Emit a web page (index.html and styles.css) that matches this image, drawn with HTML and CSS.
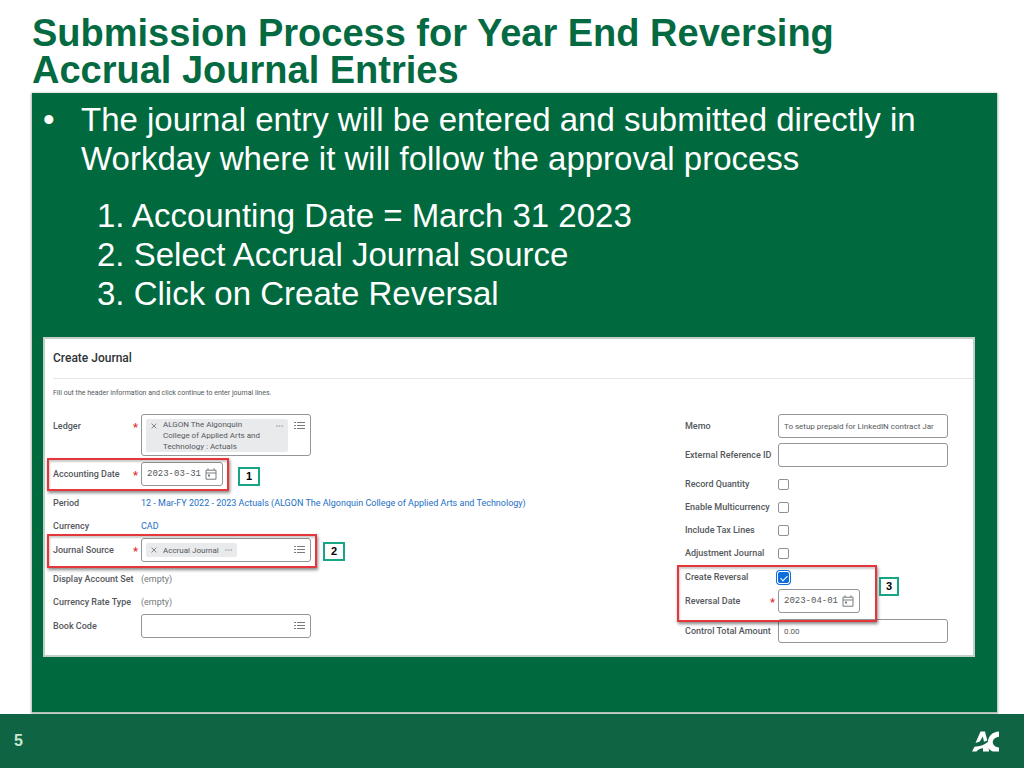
FILE: index.html
```html
<!DOCTYPE html>
<html lang="en">
<head>
<meta charset="utf-8">
<title>Submission Process for Year End Reversing Accrual Journal Entries</title>
<link rel="stylesheet" href="styles.css">
</head>
<body>
<svg width="0" height="0" class="defs" aria-hidden="true">
  <symbol id="list" viewBox="0 0 11 10"><path d="M0 1.500h2M3 1.500h8M0 4.500h2M3 4.500h8M0 7.500h2M3 7.500h8" stroke="currentColor" stroke-width="1" fill="none"/></symbol>
  <symbol id="calendar" viewBox="0 0 12 12"><path d="M1 2.200h10v9H1zM1 5h10M3 .3v2M9 .3v2" stroke="currentColor" stroke-width="1" fill="none"/><path d="M3 6.600h2v2H3z" fill="currentColor"/></symbol>
  <symbol id="cross" viewBox="0 0 6 6"><path d="M.6.6l4.800 4.800M5.400.6L.6 5.400" stroke="currentColor" stroke-width="0.9" fill="none"/></symbol>
  <symbol id="dots" viewBox="0 0 7 2"><path d="M0 1h1.600M2.700 1h1.600M5.400 1h1.600" stroke="currentColor" stroke-width="0.8" fill="none"/></symbol>
</svg>
<div class="slide">
  <h1 class="title">Submission Process for Year End Reversing<br>Accrual Journal Entries</h1>
  <main class="panel">
    <ul class="bullets"><li>The journal entry will be entered and submitted directly in Workday where it will follow the approval process</li></ul>
    <div class="steps">
      <p>1. Accounting Date = March 31 2023</p>
      <p>2. Select Accrual Journal source</p>
      <p>3. Click on Create Reversal</p>
    </div>
    <section class="card">
      <h2 class="card-title">Create Journal</h2>
      <p class="hint">Fill out the header information and click continue to enter journal lines.</p>
      <form class="form">
        <div class="column">
          <div class="row row-ledger">
            <span class="label" id="ledger">Ledger</span><span class="star">*</span>
            <div class="field picker picker-tall" role="group" aria-labelledby="ledger">
              <div class="chip chip-wide">
                <button type="button" class="icon-button" aria-label="Remove"><svg class="cross"><use href="#cross"/></svg></button>
                <span class="chip-text">ALGON The Algonquin<br>College of Applied Arts and<br>Technology : Actuals</span>
                <button type="button" class="icon-button" aria-label="More"><svg class="dots"><use href="#dots"/></svg></button>
              </div>
              <button type="button" class="icon-button list-button" aria-label="Choose ledger"><svg class="list"><use href="#list"/></svg></button>
            </div>
          </div>
          <div class="row row-date">
            <label class="label" for="date">Accounting Date</label><span class="star">*</span>
            <div class="field date"><input id="date" type="text" value="2023-03-31"><button type="button" class="icon-button" aria-label="Open calendar"><svg class="calendar"><use href="#calendar"/></svg></button></div>
            <span class="mark mark-one"></span><span class="callout callout-one">1</span>
          </div>
          <div class="row"><span class="label">Period</span><a class="link" href="#">12 - Mar-FY 2022 - 2023 Actuals (ALGON The Algonquin College of Applied Arts and Technology)</a></div>
          <div class="row"><span class="label">Currency</span><a class="link" href="#">CAD</a></div>
          <div class="row row-source">
            <span class="label" id="source">Journal Source</span><span class="star">*</span>
            <div class="field picker" role="group" aria-labelledby="source">
              <div class="chip">
                <button type="button" class="icon-button" aria-label="Remove"><svg class="cross"><use href="#cross"/></svg></button>
                <span class="chip-text">Accrual Journal</span>
                <button type="button" class="icon-button" aria-label="More"><svg class="dots"><use href="#dots"/></svg></button>
              </div>
              <button type="button" class="icon-button list-button" aria-label="Choose source"><svg class="list"><use href="#list"/></svg></button>
            </div>
            <span class="mark mark-two"></span><span class="callout callout-two">2</span>
          </div>
          <div class="row"><span class="label">Display Account Set</span><span class="empty">(empty)</span></div>
          <div class="row"><span class="label">Currency Rate Type</span><span class="empty">(empty)</span></div>
          <div class="row">
            <label class="label" for="book">Book Code</label>
            <div class="field picker"><input id="book" type="text"><button type="button" class="icon-button list-button" aria-label="Choose book code"><svg class="list"><use href="#list"/></svg></button></div>
          </div>
        </div>
        <div class="column column-right">
          <div class="row row-text"><label class="label" for="memo">Memo</label><div class="field"><input id="memo" type="text" value="To setup prepaid for LinkedIN contract Jar"></div></div>
          <div class="row row-text"><label class="label" for="ref">External Reference ID</label><div class="field"><input id="ref" type="text"></div></div>
          <div class="row row-check"><label class="label" for="qty">Record Quantity</label><input class="check" id="qty" type="checkbox"></div>
          <div class="row"><label class="label" for="multi">Enable Multicurrency</label><input class="check" id="multi" type="checkbox"></div>
          <div class="row"><label class="label" for="tax">Include Tax Lines</label><input class="check" id="tax" type="checkbox"></div>
          <div class="row"><label class="label" for="adj">Adjustment Journal</label><input class="check" id="adj" type="checkbox"></div>
          <div class="reversal">
            <div class="row"><label class="label" for="rev">Create Reversal</label><input class="check" id="rev" type="checkbox" checked></div>
            <div class="row"><label class="label" for="revdate">Reversal Date</label><span class="star">*</span>
              <div class="field date"><input id="revdate" type="text" value="2023-04-01"><button type="button" class="icon-button" aria-label="Open calendar"><svg class="calendar"><use href="#calendar"/></svg></button></div></div>
            <span class="mark mark-three"></span><span class="callout callout-three">3</span>
          </div>
          <div class="row"><label class="label" for="total">Control Total Amount</label><div class="field"><input id="total" type="text" value="0.00"></div></div>
        </div>
      </form>
    </section>
  </main>
  <footer class="footer">
    <span class="page">5</span>
    <svg class="logo" viewBox="0 0 27 21" role="img" aria-label="AC"><path d="M3.500 12L8.500.5H13l2.300 9-3.300 1.300-1.200-5.300-3 5zM0 20.500l2.500-4.800C8 15.500 12 14 15.800 11 16.500 5 20.500.8 27 .5v5.300c-6 .5-8 5.700-4.500 9 1.200 1 2.700 1.500 4.500 1.700v4h-6c-2-.7-3.500-1.800-4.500-3.500l.7 3.500H11v-3.200c-3 .2-5 1.200-6.500 3.200z" fill="#fff"/></svg>
  </footer>
</div>
</body>
</html>
```
FILE: styles.css
```css
* { box-sizing: border-box; }
body { margin: 0; background: #fff; font-family: "Liberation Sans", Arial, sans-serif; }
h1, h2, p, ul { margin: 0; padding: 0; }
.defs { position: absolute; }
.slide { min-height: 100vh; display: flex; flex-direction: column; }
.title { padding: 15px 32px 4px; color: #046a42; font-size: 38px; line-height: 37px; }
.panel { flex: 1; margin: 0 27px 2px 32px; padding: 7px 22px 24px 11px; background: #00693e; color: #fff; box-shadow: 0 1px 2px 1px #aeb9b1; }
.bullets { list-style: none; font-size: 33px; line-height: 39px; }
.bullets li { display: flex; padding-right: 40px; }
.bullets li::before { content: "•"; flex: 0 0 38px; }
.steps { padding: 18px 0 0 54px; font-size: 33px; line-height: 39px; }
.card { margin-top: 24px; padding: 0 0 12px; background: #fff; border: 2px solid #c3cfc8; color: #54585c; font-family: Roboto, sans-serif; font-size: 9px; }
.card-title { margin-left: 8px; padding: 10px 0 11px; border-bottom: 1px solid #e4e6e8; color: #2e3236; font-size: 12px; font-weight: 500; line-height: 18px; }
.hint { padding: 8px 8px 0; font-size: 7px; line-height: 12px; }
.form { display: grid; grid-template-columns: 1fr 263px; padding: 15px 25px 0 8px; }
.column { display: flex; flex-direction: column; }
.row { position: relative; display: flex; align-items: center; min-height: 23px; line-height: 11px; }
.label { flex: 0 0 88px; font-weight: 500; white-space: nowrap; }
.column-right .label { flex-basis: 93px; }
.star { width: 8px; margin-left: -8px; padding-top: 3px; color: #e02f36; font-size: 11px; font-weight: 700; line-height: 8px; }
.field { display: flex; align-items: center; width: 170px; height: 24px; background: #fff; border: 1px solid #92969a; border-radius: 3px; padding: 0 5px; }
.field input { flex: 1; min-width: 0; width: 100%; padding: 0; border: 0; outline: 0; background: none; color: #55595d; font: 8px Roboto, sans-serif; }
.field.date { width: 82px; }
.field.date input { font: 9px "Liberation Mono", monospace; }
.picker { padding: 0 5px 0 4px; }
.picker-tall { height: 42px; align-items: flex-start; padding-top: 4px; }
.chip { display: flex; align-items: center; gap: 6px; height: 14px; padding: 0 5px; border-radius: 2px; background: #e9eaec; }
.chip-wide { align-items: flex-start; width: 142px; height: 33px; }
.chip-wide .icon-button { margin-top: 4px; }
.chip-wide .icon-button:last-child { margin: 4px 0 0 auto; }
.chip-text { white-space: nowrap; font-size: 8px; }
.icon-button { display: flex; align-items: center; flex: none; min-height: 6px; padding: 0; border: 0; background: none; color: #787c80; }
.list-button { margin-left: auto; }
.picker-tall .list-button { margin-top: 2px; }
.list { width: 11px; height: 10px; }
.calendar { width: 12px; height: 12px; }
.cross { width: 6px; height: 6px; }
.dots { width: 7px; height: 2px; }
.row-ledger { margin-bottom: 6px; align-items: flex-start; }
.row-ledger .label { padding-top: 7px; }
.row-ledger .star { margin-top: 7px; }
.row-date { margin-bottom: 6px; }
.row-source { margin-bottom: 6px; }
.row-text { margin-bottom: 5px; }
.row-check { margin-top: 1px; }
.link { color: #1c70c4; text-decoration: none; white-space: nowrap; }
.empty { color: #73777b; }
.check { appearance: none; width: 11px; height: 11px; margin: 0; border: 1px solid #8d9195; border-radius: 2px; background: #fff; }
.check:checked { border: 0; background: #0c6ddb; box-shadow: 0 0 0 1px #fff, 0 0 0 2px #0c6ddb; }
.check:checked::after { content: ""; display: block; width: 3px; height: 6px; margin: 2px 4px; border: solid #fff; border-width: 0 1px 1px 0; transform: rotate(45deg); }
.reversal { position: relative; z-index: 1; margin: 1px 0 6px; }
.mark { position: absolute; border: 2px solid #e5373b; box-shadow: 1px 2px 3px #0007, inset 1px 2px 2px #0003; pointer-events: none; }
.mark-one { left: -6px; top: -4px; width: 182px; height: 33px; }
.mark-two { left: -6px; top: -4px; width: 270px; height: 34px; }
.mark-three { left: -8px; top: -1px; width: 200px; height: 57px; }
.callout { position: absolute; width: 22px; height: 19px; border: 2px solid #18a584; background: #fff; color: #000; font: 700 11px/15px "Liberation Sans", Arial, sans-serif; text-align: center; }
.callout-one { left: 185px; top: 5px; }
.callout-two { left: 270px; top: 4px; }
.callout-three { left: 194px; top: 11px; width: 20px; }
.footer { display: flex; align-items: center; justify-content: space-between; height: 54px; padding: 0 25px 0 14px; background: #0f6444; }
.page { color: #c6e5d2; font-size: 16px; font-weight: 700; }
.logo { width: 27px; height: 21px; }
```
